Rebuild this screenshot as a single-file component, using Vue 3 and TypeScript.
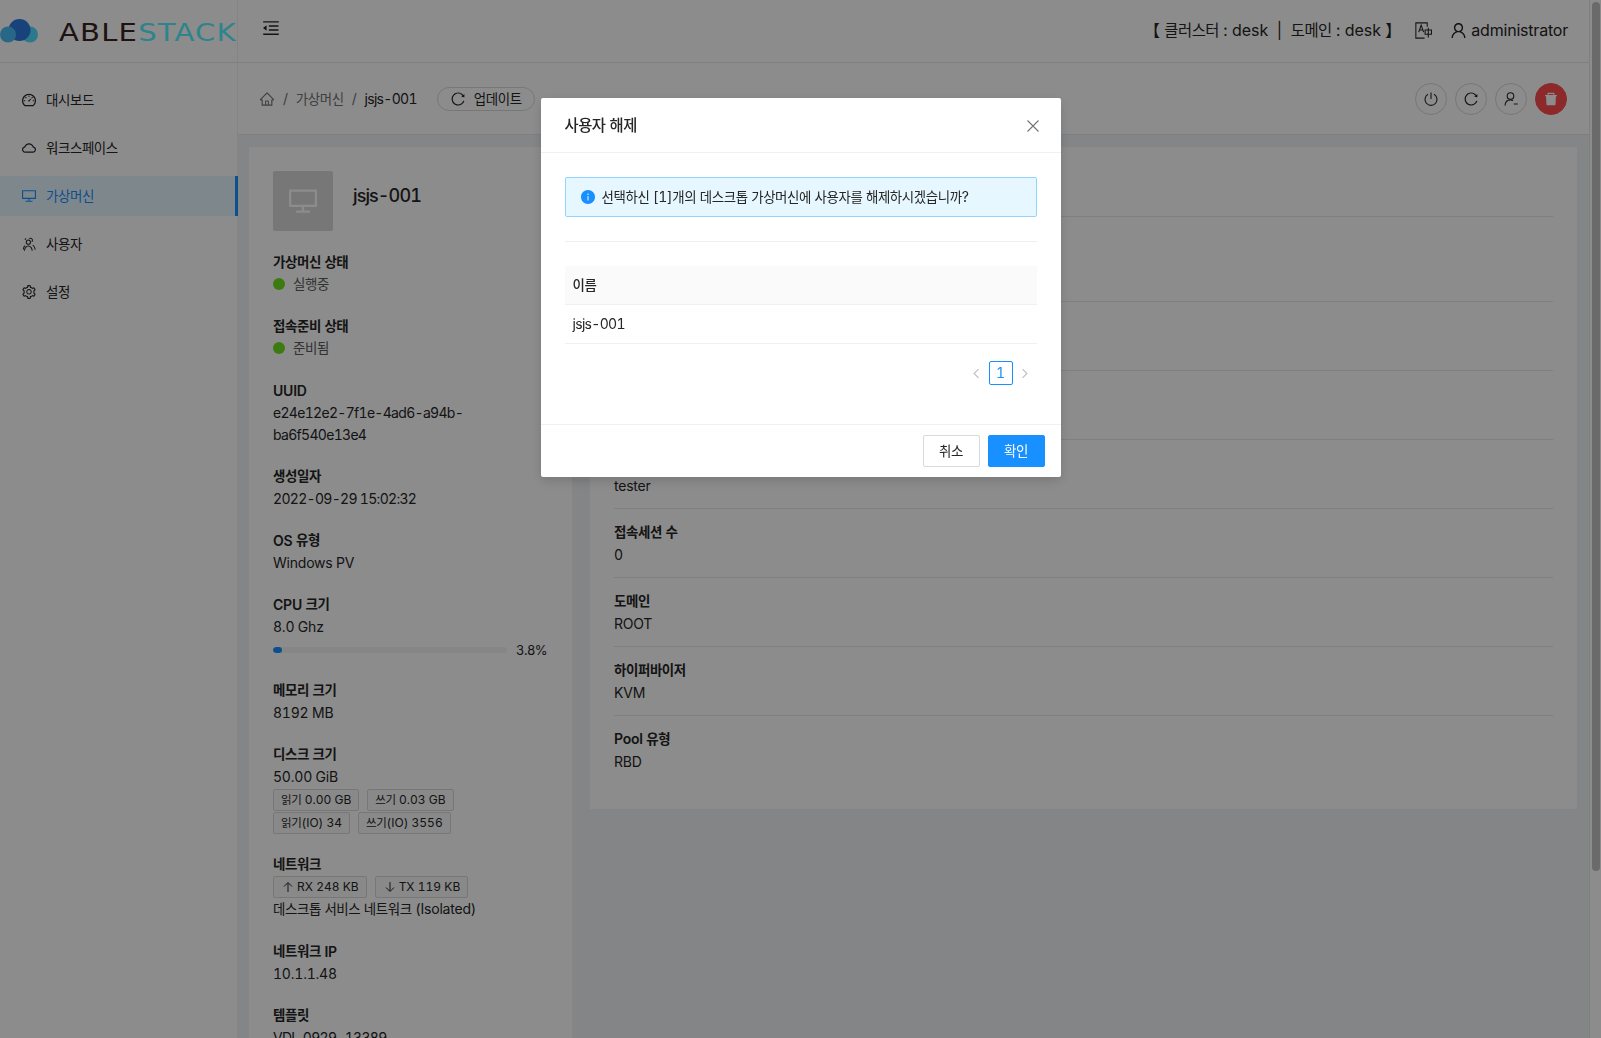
<script setup lang="ts">
import { h } from 'vue'

interface DetailRow {
  label: string
  value: string
  kind?: string
}

// 한글 구간만 따로 span 으로 감싸 자간을 줄인다
const Tx = (props: { t: string }) =>
  h(
    'span',
    null,
    props.t.split(/([\uAC00-\uD7A3]+)/).map((part) =>
      /[\uAC00-\uD7A3]/.test(part) ? h('span', { class: 'ko' }, part) : part
    )
  )
Tx.props = ['t']

const icons: Record<string, string> = {
  dashboard:
    'M924.8 385.6a446.7 446.7 0 00-96-142.4 446.7 446.7 0 00-142.4-96C631.1 123.8 572.5 112 512 112s-119.1 11.8-174.4 35.2a446.7 446.7 0 00-142.4 96 446.7 446.7 0 00-96 142.4C75.8 440.9 64 499.5 64 560c0 132.7 58.3 257.7 159.9 343.1l1.7 1.4c5.8 4.8 13.1 7.5 20.6 7.5h531.7c7.5 0 14.8-2.7 20.6-7.5l1.7-1.4C901.7 817.7 960 692.7 960 560c0-60.5-11.9-119.1-35.2-174.4zM761.4 836H262.6A371.12 371.12 0 01140 560c0-99.4 38.7-192.8 109-263 70.3-70.3 163.7-109 263-109 99.4 0 192.8 38.7 263 109 70.3 70.3 109 163.7 109 263 0 105.6-44.5 205.5-122.6 276zM623.5 421.5a8.03 8.03 0 00-11.3 0L527.7 506c-18.7-5-39.4-.2-54.1 14.5a55.95 55.95 0 000 79.2 55.95 55.95 0 0079.2 0 55.87 55.87 0 0014.5-54.1l84.5-84.5c3.1-3.1 3.1-8.2 0-11.3l-28.3-28.3zM490 320h44c4.4 0 8-3.6 8-8v-80c0-4.4-3.6-8-8-8h-44c-4.4 0-8 3.6-8 8v80c0 4.4 3.6 8 8 8zm260 218v44c0 4.4 3.6 8 8 8h80c4.4 0 8-3.6 8-8v-44c0-4.4-3.6-8-8-8h-80c-4.4 0-8 3.6-8 8zm12.7-197.2l-31.1-31.1a8.03 8.03 0 00-11.3 0l-56.6 56.6a8.03 8.03 0 000 11.3l31.1 31.1c3.1 3.1 8.2 3.1 11.3 0l56.6-56.6c3.1-3.1 3.1-8.2 0-11.3zm-458.6-31.1a8.03 8.03 0 00-11.3 0l-31.1 31.1a8.03 8.03 0 000 11.3l56.6 56.6c3.1 3.1 8.2 3.1 11.3 0l31.1-31.1c3.1-3.1 3.1-8.2 0-11.3l-56.6-56.6zM262 530h-80c-4.4 0-8 3.6-8 8v44c0 4.4 3.6 8 8 8h80c4.4 0 8-3.6 8-8v-44c0-4.4-3.6-8-8-8z',
  cloud:
    'M811.4 418.7C765.6 297.9 648.9 212 512.2 212S258.8 297.8 213 418.6C127.3 441.1 64 519.1 64 612c0 110.5 89.5 200 199.9 200h496.2C870.5 812 960 722.5 960 612c0-92.7-63.1-170.7-148.6-193.3zm36.3 281a123.07 123.07 0 01-87.6 36.3H263.9c-33.1 0-64.2-12.9-87.6-36.3A123.3 123.3 0 01140 612c0-28 9.1-54.3 26.2-76.3a125.7 125.7 0 0166.1-43.7l37.9-9.9 13.9-36.6c8.6-22.8 20.6-44.1 35.7-63.4a245.6 245.6 0 0152.4-49.9c41.1-28.9 89.5-44.2 140-44.2s98.9 15.3 140 44.2c19.9 14 37.5 30.8 52.4 49.9 15.1 19.3 27.1 40.7 35.7 63.4l13.8 36.5 37.8 10c54.3 14.5 92.1 63.8 92.1 120 0 33.1-12.9 64.3-36.3 87.7z',
  desktop:
    'M928 140H96c-17.7 0-32 14.3-32 32v496c0 17.7 14.3 32 32 32h380v112H304c-8.8 0-16 7.2-16 16v48c0 4.4 3.6 8 8 8h432c4.4 0 8-3.6 8-8v-48c0-8.8-7.2-16-16-16H548V700h380c17.7 0 32-14.3 32-32V172c0-17.7-14.3-32-32-32zm-40 488H136V212h752v416z',
  setting:
    'M924.8 625.7l-65.5-56c3.1-19 4.7-38.4 4.7-57.8s-1.6-38.8-4.7-57.8l65.5-56a32.03 32.03 0 009.3-35.2l-.9-2.6a443.74 443.74 0 00-79.7-137.9l-1.8-2.1a32.12 32.12 0 00-35.1-9.5l-81.3 28.9c-30-24.6-63.5-44-99.7-57.6l-15.7-85a32.05 32.05 0 00-25.8-25.7l-2.7-.5c-52.1-9.4-106.9-9.4-159 0l-2.7.5a32.05 32.05 0 00-25.8 25.7l-15.8 85.4a351.86 351.86 0 00-99 57.4l-81.9-29.1a32 32 0 00-35.1 9.5l-1.8 2.1a446.02 446.02 0 00-79.7 137.9l-.9 2.6c-4.5 12.5-.8 26.5 9.3 35.2l66.3 56.6c-3.1 18.8-4.6 38-4.6 57.1 0 19.2 1.5 38.4 4.6 57.1L99 625.5a32.03 32.03 0 00-9.3 35.2l.9 2.6c18.1 50.4 44.9 96.9 79.7 137.9l1.8 2.1a32.12 32.12 0 0035.1 9.5l81.9-29.1c29.8 24.5 63.1 43.9 99 57.4l15.8 85.4a32.05 32.05 0 0025.8 25.7l2.7.5a449.4 449.4 0 00159 0l2.7-.5a32.05 32.05 0 0025.8-25.7l15.7-85a350 350 0 0099.7-57.6l81.3 28.9a32 32 0 0035.1-9.5l1.8-2.1c34.8-41.1 61.6-87.5 79.7-137.9l.9-2.6c4.5-12.3.8-26.3-9.3-35zM788.3 465.9c2.5 15.1 3.8 30.6 3.8 46.1s-1.3 31-3.8 46.1l-6.6 40.1 74.7 63.9a370.03 370.03 0 01-42.6 73.6L721 702.8l-31.4 25.8c-23.9 19.6-50.5 35-79.3 45.8l-38.1 14.3-17.9 97a377.5 377.5 0 01-85 0l-17.9-97.2-37.8-14.5c-28.5-10.8-55-26.2-78.7-45.7l-31.4-25.9-93.4 33.2c-17-22.9-31.2-47.6-42.6-73.6l75.5-64.5-6.5-40c-2.4-14.9-3.7-30.3-3.7-45.5 0-15.3 1.2-30.6 3.7-45.5l6.5-40-75.5-64.5c11.3-26.1 25.6-50.7 42.6-73.6l93.4 33.2 31.4-25.9c23.7-19.5 50.2-34.9 78.7-45.7l37.9-14.3 17.9-97.2c28.1-3.2 56.8-3.2 85 0l17.9 97 38.1 14.3c28.7 10.8 55.4 26.2 79.3 45.8l31.4 25.8 92.8-32.9c17 22.9 31.2 47.6 42.6 73.6L781.8 426l6.5 39.9zM512 326c-97.2 0-176 78.8-176 176s78.8 176 176 176 176-78.8 176-176-78.8-176-176-176zm79.2 255.2A111.6 111.6 0 01512 614c-29.9 0-58-11.7-79.2-32.8A111.6 111.6 0 01400 502c0-29.9 11.7-58 32.8-79.2C454 401.6 482.1 390 512 390c29.9 0 58 11.6 79.2 32.8A111.6 111.6 0 01624 502c0 29.9-11.7 58-32.8 79.2z',
  team:
    'M470 560a165 165 0 100-330 165 165 0 000 330zm0-64a101 101 0 110-202 101 101 0 010 202zM190 940c14-190 130-330 280-330s266 140 280 330h-64c-14-150-100-266-216-266S268 790 254 940h-64zM600 110a165 165 0 01158 212 165 165 0 01-60 84l-36-52a100 100 0 0036-54 101 101 0 00-98-126 100 100 0 00-52 14l-34-54a165 165 0 0186-24zM760 560c100 50 164 170 174 320h-64c-9-125-60-225-140-265l30-55zM310 128l34 54a100 100 0 00-50 80l-64 0a165 165 0 0180-134zM120 860c6-110 46-205 120-270l42 48c-60 52-92 130-98 222h-64z',
  user:
    'M858.5 763.6a374 374 0 00-80.6-119.5 375.63 375.63 0 00-119.5-80.6c-.4-.2-.8-.3-1.2-.5C719.5 518 760 444.7 760 362c0-137-111-248-248-248S264 225 264 362c0 82.7 40.5 156 102.8 201.1-.4.2-.8.3-1.2.5-44.8 18.9-85 46-119.5 80.6a375.63 375.63 0 00-80.6 119.5A371.7 371.7 0 00136 901.8a8 8 0 008 8.2h60c4.4 0 7.9-3.5 8-7.8 2-77.2 33-149.5 87.8-204.3 56.7-56.7 132-87.9 212.2-87.9s155.5 31.2 212.2 87.9C779 752.7 810 825 812 902.2c.1 4.4 3.6 7.8 8 7.8h60a8 8 0 008-8.2c-1-47.8-10.9-94.3-29.5-138.2zM512 534c-45.9 0-89.1-17.9-121.6-50.4S340 407.9 340 362c0-45.9 17.9-89.1 50.4-121.6S466.1 190 512 190s89.1 17.9 121.6 50.4S684 316.1 684 362c0 45.9-17.9 89.1-50.4 121.6S557.9 534 512 534z',
  reload:
    'M909.1 209.3l-56.4 44.1C775.8 155.1 656.2 92 521.9 92 290 92 102.3 279.5 102 511.5 101.7 743.7 289.8 932 521.9 932c181.3 0 335.8-115 394.6-276.1 1.5-4.2-.7-8.9-4.9-10.3l-56.7-19.5a8 8 0 00-10.1 4.8c-1.8 5-3.8 10-5.9 14.9-17.3 41-42.1 77.8-73.7 109.4A344.77 344.77 0 01655.9 829c-42.3 17.9-87.4 27-133.8 27-46.5 0-91.5-9.1-133.8-27A341.5 341.5 0 01279 755.2a342.16 342.16 0 01-73.7-109.4c-17.9-42.4-27-87.4-27-133.9s9.1-91.5 27-133.9c17.3-41 42.1-77.8 73.7-109.4 31.6-31.6 68.4-56.4 109.3-73.8 42.3-17.9 87.4-27 133.8-27 46.5 0 91.5 9.1 133.8 27a341.5 341.5 0 01109.3 73.8c9.9 9.9 19.2 20.4 27.8 31.4l-60.2 47a8 8 0 003 14.1l175.6 43c5 1.2 9.9-2.6 9.9-7.7l.8-180.9c-.1-6.6-7.8-10.3-13-6.2z',
  home:
    'M946.5 505L560.1 118.8l-25.9-25.9a31.5 31.5 0 00-44.4 0L77.5 505a63.9 63.9 0 00-18.8 46c.4 35.2 29.7 63.3 64.9 63.3h42.5V940h691.8V614.3h43.4c17.1 0 33.2-6.7 45.3-18.8a63.6 63.6 0 0018.7-45.3c0-17-6.7-33.1-18.8-45.2zM568 868H456V664h112v204zm217.9-325.7V868H632V640c0-22.1-17.9-40-40-40H432c-22.1 0-40 17.9-40 40v228H238.1V542.3h-96l370-369.7 23.1 23.1L882 542.3h-96.1z',
  fold:
    'M408 442h480c4.4 0 8-3.6 8-8v-56c0-4.4-3.6-8-8-8H408c-4.4 0-8 3.6-8 8v56c0 4.4 3.6 8 8 8zm-8 204c0 4.4 3.6 8 8 8h480c4.4 0 8-3.6 8-8v-56c0-4.4-3.6-8-8-8H408c-4.4 0-8 3.6-8 8v56zm504-486H120c-4.4 0-8 3.6-8 8v56c0 4.4 3.6 8 8 8h784c4.4 0 8-3.6 8-8v-56c0-4.4-3.6-8-8-8zm0 632H120c-4.4 0-8 3.6-8 8v56c0 4.4 3.6 8 8 8h784c4.4 0 8-3.6 8-8v-56c0-4.4-3.6-8-8-8zM115.4 518.9L271.7 642c5.8 4.6 14.4.5 14.4-6.9V388.9c0-7.4-8.5-11.5-14.4-6.9L115.4 505.1a8.74 8.74 0 000 13.8z',
  trash:
    'M864 256H736v-80c0-35.3-28.7-64-64-64H352c-35.3 0-64 28.7-64 64v80H160c-17.7 0-32 14.3-32 32v32c0 4.4 3.6 8 8 8h60.4l24.7 523c1.6 34.1 29.8 61 63.9 61h454c34.2 0 62.3-26.8 63.9-61l24.7-523H888c4.4 0 8-3.6 8-8v-32c0-17.7-14.3-32-32-32zm-200 0H360v-72h304v72z',
  info:
    'M512 64C264.6 64 64 264.6 64 512s200.6 448 448 448 448-200.6 448-448S759.4 64 512 64zm32 664c0 4.4-3.6 8-8 8h-48c-4.4 0-8-3.6-8-8V456c0-4.4 3.6-8 8-8h48c4.4 0 8 3.6 8 8v272zm-32-344a48.01 48.01 0 010-96 48.01 48.01 0 010 96z',
}

const menu = [
  { label: '대시보드', icon: 'dashboard' },
  { label: '워크스페이스', icon: 'cloud' },
  { label: '가상머신', icon: 'desktop', active: true },
  { label: '사용자', icon: 'team' },
  { label: '설정', icon: 'setting' },
]

// 대화상자에 가려진 윗줄은 구분선만 보인다
const detailRows: DetailRow[] = [
  { label: '', value: '', kind: 'short' },
  { label: '', value: '', kind: 'tall' },
  { label: '', value: '' },
  { label: '', value: '' },
  { label: '사용자', value: 'tester' },
  { label: '접속세션 수', value: '0' },
  { label: '도메인', value: 'ROOT' },
  { label: '하이퍼바이저', value: 'KVM' },
  { label: 'Pool 유형', value: 'RBD', kind: 'last' },
]

const cpuUsage = 3.8
</script>

<template>
  <div class="page">
    <div class="shell">
      <aside class="sidebar">
        <div class="logo">
          <svg class="logo-mark" viewBox="0 0 38 24" aria-hidden="true">
            <circle cx="30" cy="15.500" r="8" fill="#50dcff" />
            <circle cx="19.500" cy="11" r="11" fill="#2a7ade" />
            <circle cx="8" cy="15.500" r="8" fill="#4cbcf5" />
          </svg>
          <span class="logo-text"><span class="able">ABLE</span><span class="stack">STACK</span></span>
        </div>
        <nav class="menu">
          <div v-for="item in menu" :key="item.label" class="menu-item" :class="{ active: item.active }">
            <svg class="icon" viewBox="0 0 1024 1024"><path :d="icons[item.icon]" /></svg>
            <Tx :t="item.label" />
          </div>
        </nav>
      </aside>

      <div class="main">
        <header class="topbar">
          <svg class="icon fold" viewBox="0 0 1024 1024"><path :d="icons.fold" /></svg>
          <div class="top-right">
            <span class="scope"><Tx t="【 클러스터 : desk &nbsp;|&nbsp; 도메인 : desk 】" /></span>
            <svg class="translate" viewBox="0 0 16 16" fill="none" stroke="currentColor" stroke-width="1">
              <path d="M11.500 4.500V.8H.8v14.400H9" />
              <path d="M3.500 9.500 5.800 3l2.300 6.500M4.300 7.600h3" />
              <path d="M9.500 7.500h6v4h-6zM12.500 5.500v9" />
            </svg>
            <span class="account">
              <svg class="icon" viewBox="0 0 1024 1024"><path :d="icons.user" /></svg>
              administrator
            </span>
          </div>
        </header>

        <div class="crumbbar">
          <svg class="icon home" viewBox="0 0 1024 1024"><path :d="icons.home" /></svg>
          <span class="sep">/</span>
          <span class="crumb-muted"><Tx t="가상머신" /></span>
          <span class="sep">/</span>
          <span class="num">jsjs-001</span>
          <button class="update">
            <svg class="icon" viewBox="0 0 1024 1024"><path :d="icons.reload" /></svg>
            <Tx t="업데이트" />
          </button>
          <div class="actions">
            <button class="round">
              <svg viewBox="0 0 16 16" fill="none" stroke="currentColor" stroke-width="1.100">
                <path d="M5 3.200a6 6 0 1 0 6 0M8 1.500v6.500" />
              </svg>
            </button>
            <button class="round">
              <svg class="icon" viewBox="0 0 1024 1024"><path :d="icons.reload" /></svg>
            </button>
            <button class="round">
              <svg viewBox="0 0 16 16" fill="none" stroke="currentColor" stroke-width="1.100">
                <circle cx="7.500" cy="5" r="3.300" />
                <path d="M2 14.500c.3-3.200 2.400-5.600 5.500-5.600 1 0 1.900.2 2.600.7M10.800 13h4" />
              </svg>
            </button>
            <button class="round danger">
              <svg class="icon" viewBox="0 0 1024 1024"><path :d="icons.trash" /></svg>
            </button>
          </div>
        </div>

        <div class="content">
          <section class="card summary">
            <div class="vm-head">
              <div class="vm-avatar">
                <svg class="icon" viewBox="0 0 1024 1024"><path :d="icons.desktop" /></svg>
              </div>
              <h2 class="vm-name">jsjs-001</h2>
            </div>

            <div class="group">
              <div class="label"><Tx t="가상머신 상태" /></div>
              <div class="value status"><i class="dot"></i><Tx t="실행중" /></div>
            </div>
            <div class="group">
              <div class="label"><Tx t="접속준비 상태" /></div>
              <div class="value status"><i class="dot"></i><Tx t="준비됨" /></div>
            </div>
            <div class="group">
              <div class="label">UUID</div>
              <div class="value num">e24e12e2-7f1e-4ad6-a94b-<br />ba6f540e13e4</div>
            </div>
            <div class="group">
              <div class="label"><Tx t="생성일자" /></div>
              <div class="value num">2022-09-29 15:02:32</div>
            </div>
            <div class="group">
              <div class="label"><Tx t="OS 유형" /></div>
              <div class="value">Windows PV</div>
            </div>
            <div class="group cpu">
              <div class="label"><Tx t="CPU 크기" /></div>
              <div class="value">8.0 Ghz</div>
              <div class="progress">
                <div class="track">
                  <div class="fill" :style="{ width: cpuUsage + '%' }"></div>
                </div>
                <span class="percent">{{ cpuUsage }}%</span>
              </div>
            </div>
            <div class="group">
              <div class="label"><Tx t="메모리 크기" /></div>
              <div class="value">8192 MB</div>
            </div>
            <div class="group disk">
              <div class="label"><Tx t="디스크 크기" /></div>
              <div class="value">50.00 GiB</div>
              <div class="tags first">
                <span class="tag"><Tx t="읽기 0.00 GB" /></span>
                <span class="tag"><Tx t="쓰기 0.03 GB" /></span>
              </div>
              <div class="tags next">
                <span class="tag"><Tx t="읽기(IO) 34" /></span>
                <span class="tag"><Tx t="쓰기(IO) 3556" /></span>
              </div>
            </div>
            <div class="group net">
              <div class="label"><Tx t="네트워크" /></div>
              <div class="tags flat">
                <span class="tag">
                  <svg class="arrow" viewBox="0 0 12 12"><path d="M6 11V2M2 5.500 6 1.500l4 4" /></svg>
                  RX 248 KB
                </span>
                <span class="tag">
                  <svg class="arrow" viewBox="0 0 12 12"><path d="M6 1v9M2 6.500l4 4 4-4" /></svg>
                  TX 119 KB
                </span>
              </div>
              <div class="value"><Tx t="데스크톱 서비스 네트워크 (Isolated)" /></div>
            </div>
            <div class="group">
              <div class="label"><Tx t="네트워크 IP" /></div>
              <div class="value">10.1.1.48</div>
            </div>
            <div class="group">
              <div class="label"><Tx t="템플릿" /></div>
              <div class="value num">VDI-0929-13389</div>
            </div>
          </section>

          <section class="card details">
            <div v-for="(row, i) in detailRows" :key="i" class="row" :class="row.kind">
              <div class="label"><Tx :t="row.label" /></div>
              <div class="value">{{ row.value }}</div>
            </div>
          </section>
        </div>
      </div>

      <div class="scrollbar"><div class="thumb"></div></div>
    </div>

    <div class="mask">
      <div class="modal">
        <div class="modal-head">
          <span class="modal-title"><Tx t="사용자 해제" /></span>
          <svg class="close" viewBox="0 0 14 14" fill="none" stroke="currentColor" stroke-width="1.100">
            <path d="M1.500 1.500l11 11M12.500 1.500l-11 11" />
          </svg>
        </div>
        <div class="modal-body">
          <div class="alert">
            <svg class="icon" viewBox="0 0 1024 1024"><path :d="icons.info" /></svg>
            <Tx t="선택하신 [1]개의 데스크톱 가상머신에 사용자를 해제하시겠습니까?" />
          </div>
          <div class="divider"></div>
          <div class="table-head"><Tx t="이름" /></div>
          <div class="table-row num">jsjs-001</div>
          <div class="pager">
            <span class="pager-arrow">
              <svg viewBox="0 0 10 10" fill="none" stroke="currentColor"><path d="M6.800 1 2.800 5l4 4" /></svg>
            </span>
            <span class="pager-item">1</span>
            <span class="pager-arrow">
              <svg viewBox="0 0 10 10" fill="none" stroke="currentColor"><path d="M3.200 1l4 4-4 4" /></svg>
            </span>
          </div>
        </div>
        <div class="modal-foot">
          <button class="btn"><Tx t="취소" /></button>
          <button class="btn primary"><Tx t="확인" /></button>
        </div>
      </div>
    </div>
  </div>
</template>

<style scoped>
.page {
  height: 100vh;
  overflow: hidden;
  font-family: Inter, "Noto Sans CJK KR", sans-serif;
  font-size: 14px;
  line-height: 22px;
  color: #262626;
  font-variant-numeric: tabular-nums;
  letter-spacing: -0.015em;
}

.page :deep(.ko) {
  font-size: 0.96em;
  letter-spacing: -0.03em;
}

.num {
  letter-spacing: -0.05em;
}

.shell {
  display: flex;
  height: 100%;
  background: #f0f2f5;
}

.icon {
  width: 16px;
  height: 16px;
  fill: currentColor;
  flex-shrink: 0;
}

/* 사이드바 */
.sidebar {
  width: 238px;
  flex-shrink: 0;
  background: #fff;
  box-sizing: border-box;
  border-right: 1px solid #f0f0f0;
}
.logo {
  height: 63px;
  box-sizing: border-box;
  display: flex;
  align-items: center;
  border-bottom: 1px solid #e8e8e8;
  overflow: hidden;
}
.logo-mark {
  width: 38px;
  height: 24px;
  flex-shrink: 0;
}
.logo-text {
  margin-left: 21px;
  margin-top: 3px;
  font-family: "DejaVu Sans", sans-serif;
  font-size: 24px;
  line-height: 24px;
  letter-spacing: 1px;
  display: inline-block;
  transform: scaleX(1.21);
  transform-origin: left center;
  white-space: nowrap;
}
.able {
  color: #38241d;
}
.stack {
  color: #54f0ff;
}
.menu {
  padding-top: 17px;
}
.menu-item {
  height: 40px;
  margin-bottom: 8px;
  margin-right: -1px;
  padding-left: 21px;
  display: flex;
  align-items: center;
  gap: 9px;
  box-sizing: border-box;
}
.menu-item.active {
  background: #e6f7ff;
  color: #1890ff;
  border-right: 3px solid #1890ff;
}

/* 상단바 */
.main {
  flex: 1;
  min-width: 0;
  display: flex;
  flex-direction: column;
}
.topbar {
  height: 63px;
  box-sizing: border-box;
  flex-shrink: 0;
  background: #fff;
  border-bottom: 1px solid #e8e8e8;
  display: flex;
  align-items: center;
  justify-content: space-between;
  padding: 0 21px 6px 23px;
  font-size: 16px;
}
.fold {
  width: 20px;
  height: 20px;
}
.top-right {
  display: flex;
  align-items: center;
  margin-top: 4px;
}
.scope {
  letter-spacing: 0;
}
.translate {
  width: 17px;
  height: 17px;
  margin-left: 14px;
  margin-right: 17px;
}
.account {
  display: inline-flex;
  align-items: center;
  gap: 3px;
}
.account .icon {
  width: 19px;
  height: 19px;
}

/* 경로 표시줄 */
.crumbbar {
  height: 72px;
  box-sizing: border-box;
  flex-shrink: 0;
  background: #fff;
  border-bottom: 1px solid #e8e8e8;
  display: flex;
  align-items: center;
  padding: 0 22px 0 21px;
}
.home {
  color: #737373;
}
.sep {
  margin: 0 8px;
  color: #737373;
}
.crumb-muted {
  color: #737373;
}
.update {
  height: 24px;
  margin-left: 20px;
  padding: 0 12px;
  border: 1px solid #d9d9d9;
  border-radius: 12px;
  background: #fff;
  display: inline-flex;
  align-items: center;
  gap: 8px;
  font: inherit;
  letter-spacing: inherit;
  color: inherit;
}
.actions {
  margin-left: auto;
  display: flex;
  gap: 8px;
}
.round {
  width: 32px;
  height: 32px;
  padding: 0;
  border: 1px solid #d9d9d9;
  border-radius: 50%;
  background: #fff;
  color: #262626;
  display: flex;
  align-items: center;
  justify-content: center;
}
.round svg {
  width: 16px;
  height: 16px;
}
.round.danger {
  background: #ff4d4f;
  border-color: #ff4d4f;
  color: #fff;
}

/* 본문 */
.content {
  flex: 1;
  min-height: 0;
  padding: 12px 12px 0 11px;
  display: flex;
  align-items: flex-start;
  gap: 18px;
}
.card {
  background: #fff;
  box-sizing: border-box;
}
.summary {
  width: 323px;
  flex-shrink: 0;
  padding: 24px 24px 40px;
  min-height: 960px;
}
.summary .label :deep(.ko),
.summary .status :deep(.ko) {
  position: relative;
  top: -1px;
}
.details {
  flex: 1;
  min-width: 0;
  padding: 24px;
}
.details .value {
  padding-top: 1px;
}

.vm-head {
  display: flex;
  align-items: flex-start;
  margin-bottom: 21px;
}
.vm-avatar {
  width: 60px;
  height: 60px;
  border-radius: 2px;
  background: #d9d9d9;
  display: flex;
  align-items: center;
  justify-content: center;
  color: #fff;
}
.vm-avatar .icon {
  width: 32px;
  height: 32px;
}
.vm-name {
  margin: 11px 0 0 20px;
  font-size: 18px;
  line-height: 28px;
  font-weight: 500;
  letter-spacing: -0.05em;
  color: #262626;
}

.group {
  margin-bottom: 20px;
}
.group.cpu {
  margin-bottom: 19px;
}
.group.net {
  margin-bottom: 21px;
}
.label {
  font-weight: 600;
  min-height: 22px;
}
.value {
  min-height: 22px;
}
.status {
  display: flex;
  align-items: center;
  color: #595959;
}
.dot {
  width: 12px;
  height: 12px;
  border-radius: 50%;
  background: #6ee01f;
  margin: -2px 8px 0 0;
}

.progress {
  height: 22px;
  margin-top: 1px;
  display: flex;
  align-items: center;
  gap: 9px;
  font-size: 13px;
}
.track {
  width: 234px;
  height: 6px;
  border-radius: 3px;
  background: #f5f5f5;
  overflow: hidden;
}
.fill {
  height: 100%;
  border-radius: 3px;
  background: #1890ff;
}
.percent {
  white-space: nowrap;
  letter-spacing: -0.04em;
}

.tags {
  display: flex;
  gap: 8px;
  margin-top: 2px;
}
.tags.first {
  margin-top: 1px;
}
.tags.next {
  margin-top: 1px;
}
.tags.flat {
  margin-top: 0;
}
.tag {
  height: 22px;
  box-sizing: border-box;
  padding: 0 7px;
  border: 1px solid #d9d9d9;
  border-radius: 2px;
  background: #fafafa;
  font-size: 12px;
  line-height: 20px;
  letter-spacing: 0;
  display: inline-flex;
  align-items: center;
  gap: 3px;
  white-space: nowrap;
}
.arrow {
  width: 12px;
  height: 12px;
  fill: none;
  stroke: currentColor;
  stroke-width: 1;
  margin-left: 1px;
}

.row {
  height: 69px;
  box-sizing: border-box;
  padding: 12px 0;
  border-bottom: 1px solid #e8e8e8;
}
.row.short {
  height: 46px;
}
.row.tall {
  height: 85px;
}
.row.last {
  border-bottom: none;
  height: 69px;
}

.scrollbar {
  width: 12px;
  flex-shrink: 0;
  box-sizing: border-box;
  border-left: 1px solid #e8e8e8;
  background: #fff;
  padding: 2px 1px 0 2px;
}
.thumb {
  height: 869px;
  border-radius: 4px;
  background: #c2c2c2;
}

/* 대화상자 */
.mask {
  position: fixed;
  inset: 0;
  background: rgba(0, 0, 0, 0.45);
  padding-top: 98px;
  box-sizing: border-box;
}
.modal {
  width: 520px;
  margin: 0 auto;
  background: #fff;
  border-radius: 2px;
  box-shadow: 0 4px 12px rgba(0, 0, 0, 0.15);
}
.modal-head {
  height: 55px;
  box-sizing: border-box;
  padding: 0 24px;
  border-bottom: 1px solid #f0f0f0;
  display: flex;
  align-items: center;
  justify-content: space-between;
}
.modal-title {
  font-size: 16px;
  font-weight: 500;
}
.close {
  width: 14px;
  height: 14px;
  color: #737373;
  margin-right: -3px;
  margin-top: 1px;
}
.modal-body {
  padding: 24px 24px 39px;
}
.alert {
  height: 40px;
  box-sizing: border-box;
  padding: 0 14px;
  border: 1px solid #91d5ff;
  border-radius: 2px;
  background: #e6f7ff;
  display: flex;
  align-items: center;
  gap: 6px;
}
.alert .icon {
  color: #1890ff;
}
.divider {
  height: 1px;
  margin: 24px 0;
  background: #f0f0f0;
}
.table-head,
.table-row {
  height: 39px;
  box-sizing: border-box;
  padding: 8px;
  border-bottom: 1px solid #f0f0f0;
}
.table-head {
  background: #fafafa;
  font-weight: 500;
}
.pager {
  margin-top: 17px;
  display: flex;
  justify-content: flex-end;
  height: 24px;
}
.pager-arrow {
  width: 24px;
  height: 24px;
  display: flex;
  align-items: center;
  justify-content: center;
  color: #bfbfbf;
}
.pager-arrow svg {
  width: 11px;
  height: 11px;
}
.pager-item {
  width: 24px;
  height: 24px;
  box-sizing: border-box;
  border: 1px solid #1890ff;
  border-radius: 2px;
  color: #1890ff;
  text-align: center;
  line-height: 22px;
}
.modal-foot {
  height: 53px;
  box-sizing: border-box;
  padding: 10px 16px;
  border-top: 1px solid #f0f0f0;
  display: flex;
  justify-content: flex-end;
  gap: 8px;
}
.btn {
  height: 32px;
  width: 57px;
  padding: 0;
  border: 1px solid #d9d9d9;
  border-radius: 2px;
  background: #fff;
  font: inherit;
  letter-spacing: inherit;
  color: #262626;
}
.btn.primary {
  background: #1890ff;
  border-color: #1890ff;
  color: #fff;
}
</style>

<style>
html,
body {
  margin: 0;
  overflow: hidden;
}
</style>
